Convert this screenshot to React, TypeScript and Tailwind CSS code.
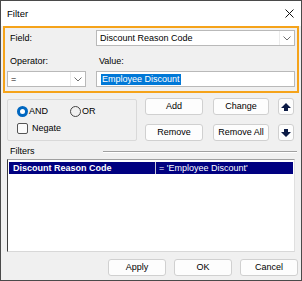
import React from "react";

function Chevron() {
  return (
    <svg width="8" height="5" viewBox="0 0 8 5" className="block">
      <polyline points="0.5,0.5 4,4 7.5,0.5" fill="none" stroke="#707070" strokeWidth="1" />
    </svg>
  );
}

function Arrow({ down }: { down?: boolean }) {
  return (
    <svg width="10" height="8" viewBox="0 0 10 8" className={down ? "block rotate-180" : "block"}>
      <path d="M5 0 L10 5 L7 5 L7 8 L3 8 L3 5 L0 5 Z" fill="#0b1a45" />
    </svg>
  );
}

function Btn({ children, w }: { children: React.ReactNode; w: string }) {
  return (
    <div className={`${w} h-[17px] flex items-center justify-center rounded-[3px] border border-[#d0d0d0] bg-[#fdfdfd] text-black`}>
      {children}
    </div>
  );
}

export default function App() {
  return (
    <div className="w-[302px] h-[281px] border border-[#4a4a4a] bg-[#f0f0f0] flex flex-col font-['Liberation_Sans',Arial,sans-serif] text-[9px] leading-[11px] text-black overflow-hidden">
      {/* Title bar */}
      <div className="h-[25px] shrink-0 bg-white flex items-center justify-between pl-[6px] pr-[7px]">
        <span className="text-[9.5px]">Filter</span>
        <svg width="9" height="9" viewBox="0 0 9 9" className="block">
          <path d="M0.5 0.5 L8.5 8.5 M8.5 0.5 L0.5 8.5" stroke="#111" strokeWidth="1" />
        </svg>
      </div>

      {/* Orange highlighted box */}
      <div className="mx-[2px] h-[67px] shrink-0 border-2 border-[#f5a31a] px-[2px] pt-[2px] pb-[4px]">
        <div className="grid grid-cols-[79px_199px] gap-x-[10px]">
          <div className="h-[16px] flex items-center pl-[3px]">Field:</div>
          <div className="h-[16px] bg-white border border-[#b9b9b9] flex items-center justify-between pl-[3px]">
            <span>Discount Reason Code</span>
            <div className="flex items-center h-full border-l border-[#ececec] px-[3px]">
              <Chevron />
            </div>
          </div>
          <div className="h-[25px] flex items-end pb-[4px] pl-[3px]">Operator:</div>
          <div className="h-[25px] flex items-end pb-[4px] pl-[3px]">Value:</div>
          <div className="h-[16px] bg-white border border-[#b9b9b9] flex items-center justify-between pl-[3px]">
            <span>=</span>
            <div className="flex items-center h-full border-l border-[#ececec] px-[3px]">
              <Chevron />
            </div>
          </div>
          <div className="h-[16px] bg-white border border-[#b9b9b9] flex items-center pl-[4px]">
            <span className="bg-[#0078d7] text-white px-[1px]">Employee Discount</span>
          </div>
        </div>
      </div>

      {/* Middle */}
      <div className="h-[43px] shrink-0 mt-[5px] flex items-start pl-[6px]">
        <div className="mt-[1px] w-[130px] h-[42px] border border-[#d9d9d9] rounded-[2px] pl-[9px] pt-[6px] flex flex-col gap-[6px]">
          <div className="flex items-center h-[11px]">
            <div className="w-[11px] h-[11px] rounded-full bg-[#0067c0] flex items-center justify-center">
              <div className="w-[5px] h-[5px] rounded-full bg-white" />
            </div>
            <span className="ml-[1px]">AND</span>
            <div className="ml-[22px] w-[11px] h-[11px] rounded-full border border-[#444]" />
            <span className="ml-[1px]">OR</span>
          </div>
          <div className="flex items-center h-[11px]">
            <div className="w-[11px] h-[11px] rounded-[2px] border border-[#555] bg-[#fbfbfb]" />
            <span className="ml-[4px]">Negate</span>
          </div>
        </div>
        <div className="ml-[8px] flex flex-col gap-[9px]">
          <Btn w="w-[58px]">Add</Btn>
          <Btn w="w-[58px]">Remove</Btn>
        </div>
        <div className="ml-[10px] flex flex-col gap-[9px]">
          <Btn w="w-[56px]">Change</Btn>
          <Btn w="w-[56px]">Remove All</Btn>
        </div>
        <div className="ml-[9px] flex flex-col gap-[9px]">
          <div className="w-[16px] h-[17px] flex items-center justify-center rounded-[3px] border border-[#d0d0d0] bg-[#fdfdfd]">
            <Arrow />
          </div>
          <div className="w-[16px] h-[17px] flex items-center justify-center rounded-[3px] border border-[#d0d0d0] bg-[#fdfdfd]">
            <Arrow down />
          </div>
        </div>
      </div>

      {/* Filters header */}
      <div className="h-[18px] shrink-0 pt-[3px] flex items-center pl-[9px] pr-[4px]">
        <span className="w-[93px]">Filters</span>
        <div className="flex-1 h-[2px] border-t border-[#a0a0a0] border-b border-b-white" />
      </div>

      {/* List */}
      <div className="mx-[6px] h-[93px] shrink-0 bg-white border-t border-l border-t-[#a0a0a0] border-l-[#3c3c3c] border-r border-b border-r-[#e0e0e0] border-b-[#d8d8d8] pt-[2px] pl-[1px] pr-[1px]">
        <div className="h-[12px] bg-[#000080] text-white flex items-center">
          <div className="w-[147px] pl-[4px] font-bold border-r border-[#c8c8d8] h-full flex items-center">Discount Reason Code</div>
          <div className="pl-[3px]">= 'Employee Discount'</div>
        </div>
      </div>

      {/* Bottom buttons */}
      <div className="mt-[7px] flex justify-end gap-[8px] pr-[3px]">
        <Btn w="w-[58px]">Apply</Btn>
        <Btn w="w-[58px]">OK</Btn>
        <Btn w="w-[58px]">Cancel</Btn>
      </div>
    </div>
  );
}
